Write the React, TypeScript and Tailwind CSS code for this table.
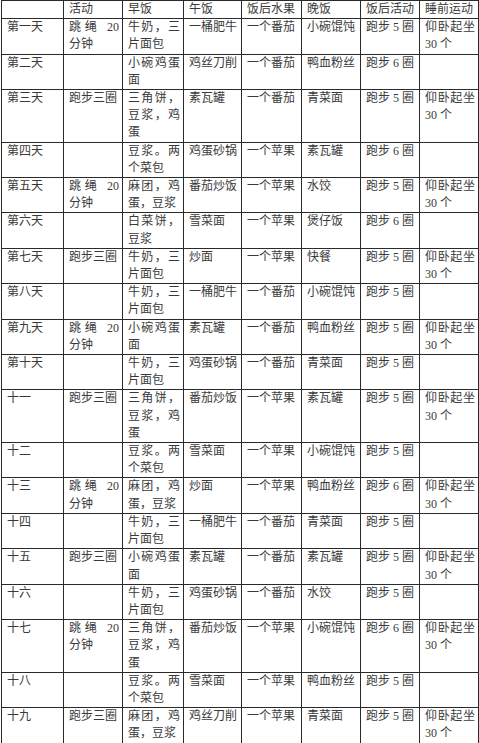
import React from "react";

const header = ["", "活动", "早饭", "午饭", "饭后水果", "晚饭", "饭后活动", "睡前运动"];

const J = "跳绳 20 分钟";
const P = "跑步三圈";
const S = "仰卧起坐 30 个";
const M = "牛奶，三片面包";
const SJ = "三角饼，豆浆，鸡蛋";
const DJ = "豆浆。两个菜包";
const MT = "麻团，鸡蛋，豆浆";
const XW = "小碗鸡蛋面";

const rows: string[][] = [
  ["第一天", J, M, "一桶肥牛", "一个番茄", "小碗馄饨", "跑步 5 圈", S],
  ["第二天", "", XW, "鸡丝刀削", "一个番茄", "鸭血粉丝", "跑步 6 圈", ""],
  ["第三天", P, SJ, "素瓦罐", "一个番茄", "青菜面", "跑步 5 圈", S],
  ["第四天", "", DJ, "鸡蛋砂锅", "一个苹果", "素瓦罐", "跑步 6 圈", ""],
  ["第五天", J, MT, "番茄炒饭", "一个苹果", "水饺", "跑步 5 圈", S],
  ["第六天", "", "白菜饼，豆浆", "雪菜面", "一个苹果", "煲仔饭", "跑步 6 圈", ""],
  ["第七天", P, M, "炒面", "一个苹果", "快餐", "跑步 5 圈", S],
  ["第八天", "", M, "一桶肥牛", "一个番茄", "小碗馄饨", "跑步 5 圈", ""],
  ["第九天", J, XW, "素瓦罐", "一个番茄", "鸭血粉丝", "跑步 5 圈", S],
  ["第十天", "", M, "鸡蛋砂锅", "一个番茄", "青菜面", "跑步 5 圈", ""],
  ["十一", P, SJ, "番茄炒饭", "一个苹果", "素瓦罐", "跑步 5 圈", S],
  ["十二", "", DJ, "雪菜面", "一个苹果", "小碗馄饨", "跑步 5 圈", ""],
  ["十三", J, MT, "炒面", "一个苹果", "鸭血粉丝", "跑步 6 圈", S],
  ["十四", "", M, "一桶肥牛", "一个番茄", "青菜面", "跑步 5 圈", ""],
  ["十五", P, XW, "素瓦罐", "一个番茄", "素瓦罐", "跑步 5 圈", S],
  ["十六", "", M, "鸡蛋砂锅", "一个番茄", "水饺", "跑步 5 圈", ""],
  ["十七", J, SJ, "番茄炒饭", "一个苹果", "小碗馄饨", "跑步 6 圈", S],
  ["十八", "", DJ, "雪菜面", "一个苹果", "鸭血粉丝", "跑步 5 圈", ""],
  ["十九", P, MT, "鸡丝刀削", "一个苹果", "青菜面", "跑步 5 圈", S],
];

export default function App() {
  return (
    <div className="min-h-[743px] w-[479px] bg-white">
      <div
        className="ml-px grid w-[478px] grid-cols-[62px_59px_61px_58px_60px_59px_59px_59px] border-l border-t border-[#2a2a2a] text-[12px] leading-[17.2px] text-[#3a3a3a]"
        style={{ fontFamily: '"Liberation Serif", "Noto Sans CJK SC", serif' }}
      >
        {header.map((h, i) => (
          <div key={"h" + i} className="border-b border-r border-[#2a2a2a] pl-[5px] pr-[3px] text-justify">
            {h}
          </div>
        ))}
        {rows.map((r, ri) =>
          r.map((c, ci) => (
            <div
              key={ri + "-" + ci}
              className="border-b border-r border-[#2a2a2a] pl-[5px] pr-[3px] text-justify"
            >
              {c}
            </div>
          ))
        )}
      </div>
    </div>
  );
}
